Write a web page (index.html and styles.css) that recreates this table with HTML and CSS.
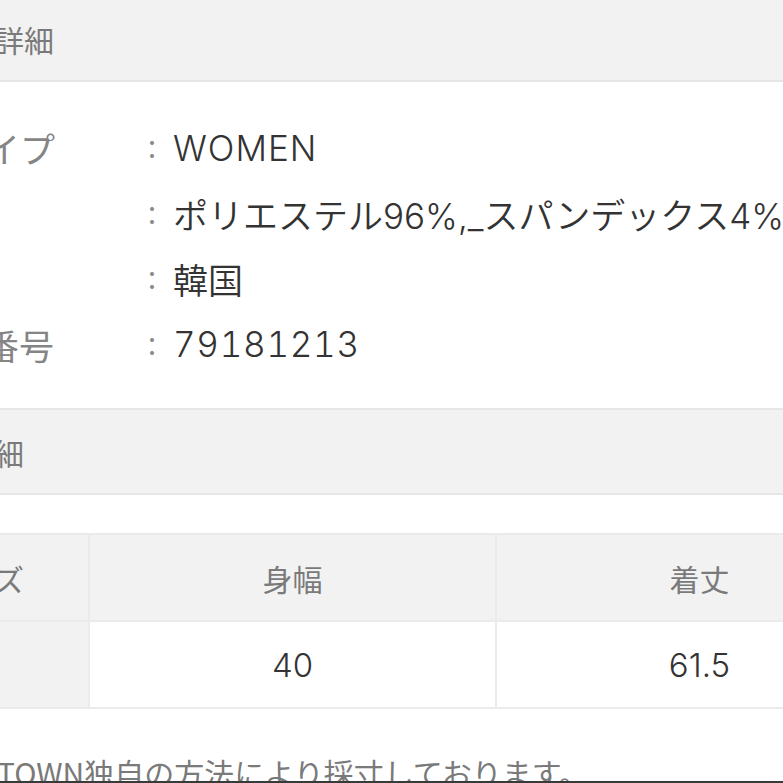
FILE: index.html
```html
<!DOCTYPE html>
<html lang="ja">
<head>
<meta charset="utf-8">
<title>詳細</title>
<link rel="stylesheet" href="styles.css">
</head>
<body>
<div class="frame">
  <div class="page">
    <div class="sec-head first"><span class="head-text head-1">詳細</span></div>
    <div class="spec">
      <div class="row"><span class="label label-1">イプ</span><span class="colon">：</span><span class="value latin">WOMEN</span></div>
      <div class="row"><span class="label"></span><span class="colon">：</span><span class="value">ポリエステル96%,_スパンデックス4%</span></div>
      <div class="row"><span class="label"></span><span class="colon">：</span><span class="value">韓国</span></div>
      <div class="row"><span class="label label-4">番号</span><span class="colon">：</span><span class="value number">79181213</span></div>
    </div>
    <div class="sec-head second"><span class="head-text head-2">細</span></div>
    <div class="size-table">
      <div class="cell th first-col"><span class="cut">ズ</span></div>
      <div class="cell th">身幅</div>
      <div class="cell th">着丈</div>
      <div class="cell th first-col"></div>
      <div class="cell td">40</div>
      <div class="cell td">61.5</div>
    </div>
    <p class="note">TOWN独自の方法により採寸しております。</p>
  </div>
  <div class="bottom-line"></div>
</div>
</body>
</html>
```
FILE: styles.css
```css
html, body {
  margin: 0;
  padding: 0;
  background: #ffffff;
}
body {
  width: 783px;
  height: 783px;
  overflow: hidden;
  font-family: Inter, "Noto Sans CJK JP", sans-serif;
}
.frame {
  display: flex;
  flex-direction: column;
  width: 783px;
  height: 783px;
  overflow: hidden;
}
.page {
  height: 781px;
  overflow: hidden;
  display: flex;
  flex-direction: column;
  flex: none;
}
.bottom-line {
  height: 2px;
  background: #3a3a3a;
  flex: none;
}
.sec-head {
  background: #f2f2f2;
  border-bottom: 2px solid #e6e6e6;
  display: flex;
  align-items: center;
  flex: none;
}
.sec-head.first {
  height: 80px;
}
.sec-head.second {
  height: 83px;
  border-top: 2px solid #e6e6e6;
}
.head-text {
  font-family: "Noto Sans CJK JP", sans-serif;
  font-size: 30px;
  line-height: 30px;
  color: #7a7a7a;
  white-space: nowrap;
}
.head-1 { margin-left: -6px; margin-top: -2px; }
.head-2 { margin-left: -6px; }
.spec {
  padding: 33px 0 31px;
  display: flex;
  flex-direction: column;
  flex: none;
}
.row {
  display: flex;
  align-items: center;
  height: 65.5px;
  white-space: nowrap;
}
.label {
  width: 139px;
  flex: none;
  font-family: "Noto Sans CJK JP", sans-serif;
  font-size: 35px;
  color: #858585;
}
.label-1 { margin-left: -15px; width: 154px; }
.label-4 { margin-left: -16px; width: 155px; }
.colon {
  width: 26px;
  flex: none;
  font-family: "Noto Sans CJK JP", sans-serif;
  font-size: 26px;
  color: #8a8a8a;
  text-align: center;
  margin-right: 8px;
}
.value {
  font-size: 35px;
  font-weight: 350;
  color: #333333;
  white-space: nowrap;
}
.latin {
  letter-spacing: 1px;
}
.number {
  font-variant-numeric: tabular-nums;
  letter-spacing: 0.7px;
}
.size-table {
  margin-top: 38px;
  display: grid;
  grid-template-columns: 88px 405px 405px;
  grid-template-rows: 85px 85px;
  gap: 2px;
  padding: 2px 0;
  background: #ebebeb;
  width: 902px;
  flex: none;
}
.cell {
  display: flex;
  align-items: center;
  justify-content: center;
  white-space: nowrap;
}
.th {
  background: #f2f2f2;
  font-family: "Noto Sans CJK JP", sans-serif;
  font-size: 30px;
  color: #7a7a7a;
}
.td {
  background: #ffffff;
  font-size: 33px;
  font-weight: 350;
  color: #333333;
}
.first-col {
  justify-content: flex-start;
}
.cut {
  margin-left: -6px;
}
.note {
  margin: 48px 0 0 -3px;
  font-family: "Noto Sans CJK JP", sans-serif;
  font-size: 30px;
  line-height: 30px;
  color: #7a7a7a;
  white-space: nowrap;
  flex: none;
}
```
